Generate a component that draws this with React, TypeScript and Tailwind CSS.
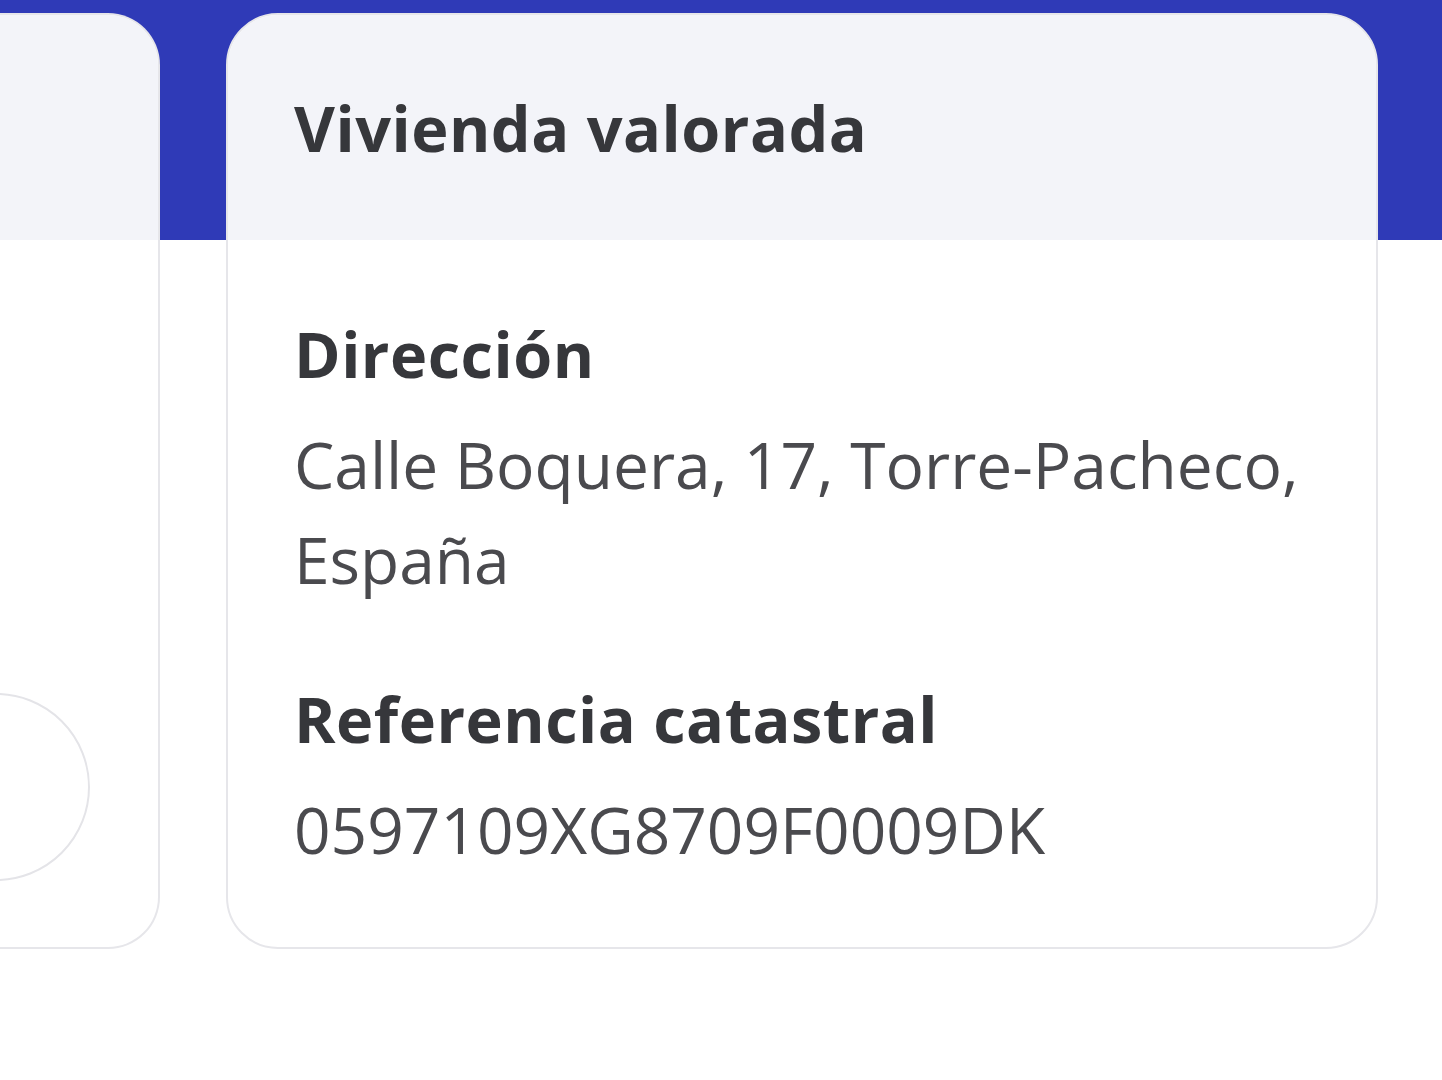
const details = [
  { label: "Dirección", value: "Calle Boquera, 17, Torre-Pacheco, España", gap: "pt-[74px]" },
  { label: "Referencia catastral", value: "0597109XG8709F0009DK", gap: "pt-[72px]" },
];

const App = () => {
  return (
    <main className="w-[1442px] h-[1080px] overflow-hidden bg-white bg-[linear-gradient(to_bottom,#2f3ab7_240px,#ffffff_240px)] pt-[13px] font-['Open_Sans',sans-serif]">
      <div className="flex gap-[66px] items-start">
        {/* Left card, mostly out of view */}
        <section className="w-[160px] h-[936px] shrink-0 rounded-r-[52px] border-[2px] border-l-0 border-[#e6e6ea] bg-white overflow-hidden flex flex-col">
          <div className="h-[225px] bg-[#f3f4f9]" />
          <div className="flex-1 pt-[453px]">
            <div className="-ml-[98px] w-[188px] h-[188px] rounded-full border-[2px] border-[#e4e4e8]" />
          </div>
        </section>

        {/* Right card */}
        <section className="w-[1152px] h-[936px] shrink-0 rounded-[52px] border-[2px] border-[#e6e6ea] bg-white overflow-hidden flex flex-col">
          <header className="h-[225px] bg-[#f3f4f9] px-[66px] pt-[73px]">
            <h1 className="text-[63px] leading-[80px] font-bold text-[#36373b] tracking-[0.5px]">
              Vivienda valorada
            </h1>
          </header>

          <div className="px-[66px] flex flex-col">
            {details.map((d) => (
              <div key={d.label} className={d.gap}>
                <h2 className="text-[63px] leading-[80px] font-bold text-[#36373b] tracking-[0.5px]">{d.label}</h2>
                <p className="mt-[23px] text-[64px] leading-[95px] text-[#4a4a4e] max-w-[1020px]">{d.value}</p>
              </div>
            ))}
          </div>
        </section>
      </div>
    </main>
  );
};

export default App;
